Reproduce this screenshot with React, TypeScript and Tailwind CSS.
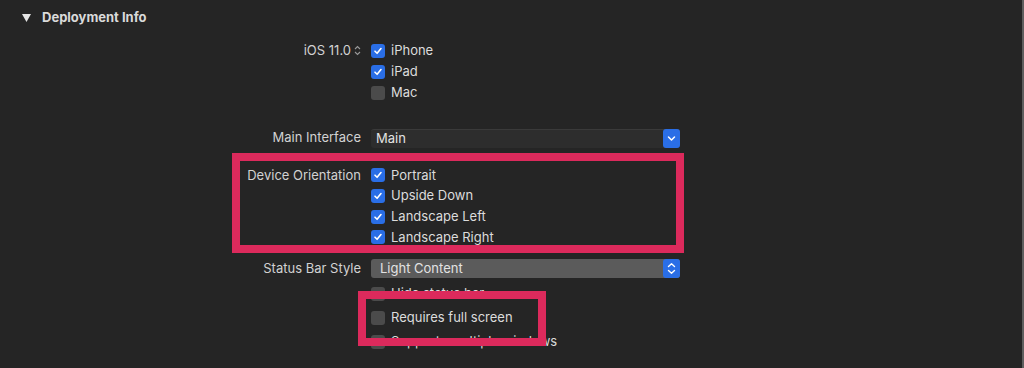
import React from "react";

const font = { fontFamily: "Inter, 'Noto Sans', 'Liberation Sans', sans-serif" };

function Check({ checked }: { checked?: boolean }) {
  if (!checked) {
    return <span className="w-[14px] h-[14px] rounded-[3px] bg-[#4b4b4b] shrink-0" />;
  }
  return (
    <span className="w-[14px] h-[14px] rounded-[3px] bg-[#2a6ee6] shrink-0 flex items-center justify-center">
      <svg width="10" height="10" viewBox="0 0 10 10">
        <path d="M2 5.2 L4.1 7.3 L8 2.6" fill="none" stroke="#fff" strokeWidth="1.6" strokeLinecap="round" strokeLinejoin="round" />
      </svg>
    </span>
  );
}

function Row({
  label,
  children,
  className = "h-[21px]",
}: {
  label?: React.ReactNode;
  children?: React.ReactNode;
  className?: string;
}) {
  return (
    <div className={"flex items-center " + className}>
      <div className="w-[361px] shrink-0 flex justify-end items-center text-[#d2d2d2]">{label}</div>
      <div className="ml-[10px] flex items-center flex-1">{children}</div>
    </div>
  );
}

function CheckItem({ text, checked }: { text: string; checked?: boolean }) {
  return (
    <div className="flex items-center gap-[6px]">
      <Check checked={checked} />
      <span className="text-[#dcdcdc]">{text}</span>
    </div>
  );
}

function Popup({ value, light }: { value: string; light?: boolean }) {
  return (
    <div
      className={
        "w-[309px] h-[19px] rounded-[3px] flex items-center justify-between " +
        (light ? "bg-[#5b5b5b]" : "bg-[#2d2d2d] border-t border-[#3a3a3a]")
      }
    >
      <span className={"text-[#e2e2e2] " + (light ? "pl-[9px]" : "pl-[5px]")}>{value}</span>
      <span className="w-[17px] h-[19px] rounded-[3px] bg-[#2a6ee6] flex items-center justify-center">
        {light ? (
          <svg width="9" height="13" viewBox="0 0 9 13">
            <path d="M1.5 4.5 L4.5 1.8 L7.5 4.5 M1.5 8.5 L4.5 11.2 L7.5 8.5" fill="none" stroke="#fff" strokeWidth="1.4" strokeLinecap="round" strokeLinejoin="round" />
          </svg>
        ) : (
          <svg width="9" height="9" viewBox="0 0 9 9">
            <path d="M1.5 3 L4.5 6 L7.5 3" fill="none" stroke="#fff" strokeWidth="1.5" strokeLinecap="round" strokeLinejoin="round" />
          </svg>
        )}
      </span>
    </div>
  );
}

export default function App() {
  return (
    <div style={font} className="w-[1024px] h-[368px] bg-[#252525] text-[13px] overflow-hidden flex">
      <div className="relative flex-1">
        <div className="h-[35px] flex items-center pl-[22px] gap-[11px]">
          <svg width="9" height="8" viewBox="0 0 9 8">
            <path d="M0 0 L9 0 L4.5 8 Z" fill="#e6e6e6" />
          </svg>
          <span className="font-bold text-[#dadada]">Deployment Info</span>
        </div>

        <div className="mt-[5px]">
          <Row
            label={
              <span className="flex items-center gap-[3px]">
                iOS 11.0
                <svg width="7" height="11" viewBox="0 0 7 11">
                  <path d="M1 4 L3.5 1.5 L6 4 M1 7 L3.5 9.5 L6 7" fill="none" stroke="#9a9a9a" strokeWidth="1.1" />
                </svg>
              </span>
            }
          >
            <CheckItem text="iPhone" checked />
          </Row>
          <Row>
            <CheckItem text="iPad" checked />
          </Row>
          <Row>
            <CheckItem text="Mac" />
          </Row>
        </div>

        <div className="mt-[25px]">
          <Row label="Main Interface" className="h-[20px]">
            <Popup value="Main" />
          </Row>
        </div>

        <div className="mt-[17px]">
          <Row label="Device Orientation" className="h-[20.7px]">
            <CheckItem text="Portrait" checked />
          </Row>
          <Row className="h-[20.7px]">
            <CheckItem text="Upside Down" checked />
          </Row>
          <Row className="h-[20.7px]">
            <CheckItem text="Landscape Left" checked />
          </Row>
          <Row className="h-[20.7px]">
            <CheckItem text="Landscape Right" checked />
          </Row>
        </div>

        <div className="mt-[11px]">
          <Row label="Status Bar Style" className="h-[20px]">
            <Popup value="Light Content" light />
          </Row>
        </div>

        <div className="mt-[3px]">
          <Row className="h-[24px]">
            <CheckItem text="Hide status bar" />
          </Row>
          <Row className="h-[24px]">
            <CheckItem text="Requires full screen" />
          </Row>
          <Row className="h-[24px]">
            <CheckItem text="Supports multiple windows" />
          </Row>
        </div>

        {/* annotation boxes */}
        <div className="absolute left-[232px] top-[153px] w-[452px] h-[100px] border-[8px] border-[#dc2a5c] pointer-events-none" />
        <div className="absolute left-[358px] top-[291px] w-[188px] h-[55px] border-[8px] border-[#dc2a5c] pointer-events-none" />
      </div>
      <div className="w-[2px] h-full bg-[#5e5e5e]" />
    </div>
  );
}
